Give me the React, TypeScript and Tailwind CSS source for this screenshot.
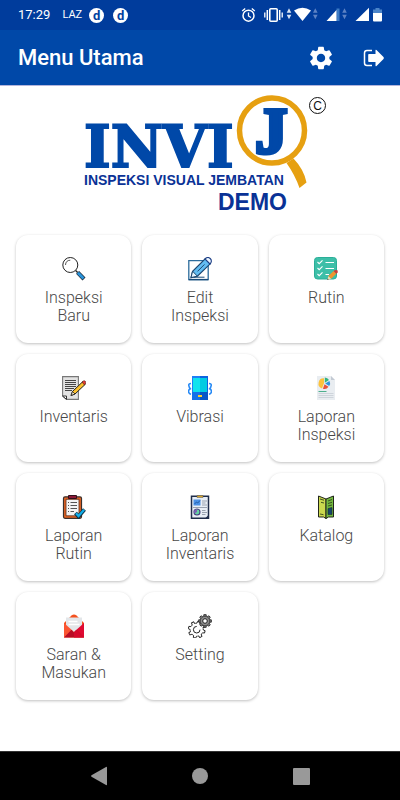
import type { ReactNode } from 'react'
import { MdSettings } from 'react-icons/md'

interface MenuItem {
  label: string
  icon: ReactNode
}

const GEAR_ANGLES = [0, 45, 90, 135, 180, 225, 270, 315]

function Icon({ children }: { children: ReactNode }) {
  return (
    <svg viewBox="0 0 24 24" className="size-6 shrink-0" fill="none" aria-hidden="true">
      {children}
    </svg>
  )
}

const items: MenuItem[] = [
  {
    label: 'Inspeksi Baru',
    icon: (
      <Icon>
        <circle cx="8.3" cy="8" r="7.5" stroke="#222" strokeWidth="1" />
        <path d="M3.5 8a5 5 0 0 1 4.8-4.8" stroke="#444" strokeWidth=".9" />
        <path d="M13.6 13.4l2 2" stroke="#222" strokeWidth="1.4" />
        <path d="M15.6 15.4l6.4 6.6" stroke="#1b2733" strokeWidth="4.2" />
        <path d="M15.9 15.7l5.6 5.8" stroke="#2a94dc" strokeWidth="2.8" />
      </Icon>
    ),
  },
  {
    label: 'Edit Inspeksi',
    icon: (
      <Icon>
        <path d="M.8 3.6h19.4v19H.8z" stroke="#2c6c9c" strokeWidth="1.3" />
        <path d="M.8 22.6h19.4" stroke="#174a78" strokeWidth="1.4" />
        <path d="M6 20.2h10.5" stroke="#174a78" />
        <path d="M3 20.6l1.6-6.4L17.4 1.6l5 5L9.4 19.2z" fill="#63bdf2" stroke="#1c4670" strokeWidth="1.2" />
        <path d="M3 20.6l1.6-6.4 4.8 5z" fill="#e8f5fd" stroke="#1c4670" />
        <path d="M17 2l1.5-1.2q2-1 3.7.7t.9 3.7L22 7z" fill="#eaf5ff" stroke="#1e3f86" strokeWidth="1.1" />
        <path d="M9.5 14.4l7-7" stroke="#1c4670" strokeWidth="1" />
      </Icon>
    ),
  },
  {
    label: 'Rutin',
    icon: (
      <Icon>
        <rect x=".5" y=".5" width="22" height="21.5" rx="3" fill="#3dbfa8" stroke="#2bae98" />
        <path
          d="M3.5 5l1.7 1.7L8.5 3.3M3.5 11l1.7 1.7L8.5 9.3M3.5 17l1.7 1.7L8.5 15.3M11.5 5.5H20M11.5 11.5H20M11.5 17.5H15"
          stroke="#fff"
          strokeWidth="1.1"
        />
        <path d="M13.2 23l1.2-4 2.8 2.8z" fill="#f5d9ae" />
        <path d="M13.2 23l.5-1.5 1 1z" fill="#333" />
        <path d="M14.4 19l5.2-4.9 2.7 2.7-5.1 5z" fill="#f0952d" />
        <path d="M19.6 14.1l1.5-1.1 2.7.4-.2 2-1.3 1.4z" fill="#d03a35" />
      </Icon>
    ),
  },
  {
    label: 'Inventaris',
    icon: (
      <Icon>
        <path d="M.6.6h15.8v22.8H4.5L.6 20z" fill="#e3e3e3" stroke="#777" strokeWidth="1.1" />
        <path d="M.6 20h3.9v3.4z" fill="#fff" stroke="#333" />
        <path
          d="M3 4.5h11M3 6.5h11M3 8.5h11M3 10.5h11M3 12.5h9M3 14.5h7"
          stroke="#333"
          strokeWidth=".9"
        />
        <path d="M9 19.5l1.5-4L20.8 5.6l2.6 2.6L13 18z" fill="#fbc02d" stroke="#222" />
        <path d="M9 19.5l1.5-4L13 18z" fill="#f6e3bd" stroke="#222" strokeWidth=".8" />
        <path d="M20.2 6.1l1.3-1.2q1.5-.4 2 .6t-.2 2.4l-1 1z" fill="#e53935" stroke="#4a1512" strokeWidth=".6" />
      </Icon>
    ),
  },
  {
    label: 'Vibrasi',
    icon: (
      <Icon>
        <path d="M4 0h16v24H4z" fill="#1f7ff5" />
        <path d="M12 0h8v24h-8z" fill="#0d63e0" />
        <path d="M5 2h7v14H5z" fill="#10e3ee" />
        <path d="M12 2h7v14h-7z" fill="#02cbe2" />
        <path d="M4 16h16v8H4z" fill="#0756c6" />
        <path d="M4 16h8v8H4z" fill="#1672e8" />
        <path d="M10 19h4v2h-4z" fill="#ffd02b" />
        <path
          d="M3 7.5q-2.5 0-2.2 2t1.5 3.3q-2 1-1.7 3t2.4 2.5M21 7.5q2.5 0 2.2 2t-1.5 3.3q2 1 1.7 3T21 18.3"
          stroke="#2589f5"
          strokeWidth="1.6"
        />
      </Icon>
    ),
  },
  {
    label: 'Laporan Inspeksi',
    icon: (
      <Icon>
        <path d="M3 0h14l4 4v20H3z" fill="#e9edf1" />
        <path d="M17 0l4 4h-4z" fill="#c3cad3" />
        <path d="M10 2.3a5.2 5.2 0 0 0-2 10.1l2-5.1z" fill="#fcc23c" />
        <path d="M10.8 6.7V1.5a5.2 5.2 0 0 1 4.2 2.6z" fill="#35b37e" />
        <path d="M11.2 7.4l4.3-2.3a5 5 0 0 1-.3 5z" fill="#2d93db" />
        <path d="M10.5 8.2l4 2.6A5 5 0 0 1 8.9 12.7z" fill="#e8503a" />
        <path d="M4.5 15.5h8" stroke="#4db08d" />
        <path d="M4.5 17.5h15M4.5 19.5h15M4.5 21.5h15" stroke="#c6cdd5" strokeWidth=".8" />
      </Icon>
    ),
  },
  {
    label: 'Laporan Rutin',
    icon: (
      <Icon>
        <rect x="1.5" y="1.8" width="18" height="21.5" rx="1.5" fill="#e46424" stroke="#3a302c" strokeWidth="1.2" />
        <path d="M4 4.3h13v16.5H4z" fill="#f4f4f4" stroke="#5a2b16" strokeWidth=".8" />
        <path d="M6.5.5h8v3h-8z" fill="#8b1837" stroke="#33101a" />
        <path d="M6 7.5h1M8.5 7.5H15M6 10.5h1M8.5 10.5H15M6 13.5h1M8.5 13.5H15M6 16.5h1M8.5 16.5H12" stroke="#555" />
        <path d="M13.5 18l3 3.5 6-7" stroke="#102f40" strokeWidth="3.8" />
        <path d="M14 18.3l2.5 2.8 5.6-6.3" stroke="#10aeea" strokeWidth="2.2" />
      </Icon>
    ),
  },
  {
    label: 'Laporan Inventaris',
    icon: (
      <Icon>
        <path d="M3.5 1.2h17v22h-17z" fill="#e8eef5" stroke="#1e2c49" strokeWidth="1.5" />
        <path d="M9 .5h6v2H9z" fill="#d7a52e" stroke="#555" strokeWidth=".5" />
        <path d="M5.5 4.5h7v6h-7z" fill="#4b91e6" />
        <path d="M6.5 9l2-2 1.2 1L12 5.5" stroke="#174f96" strokeWidth=".8" />
        <path d="M14 6h5M14 8h3.5M14 10h5M5 12.5h14M14 15.5h3.5M14 17.5h5M14 19.5h3.5" stroke="#9aa3b0" />
        <circle cx="9" cy="17" r="3" fill="#65d3a3" stroke="#44407c" strokeWidth="1.1" />
        <path d="M9 17v-3a3 3 0 0 0-2.6 4.5z" fill="#7c61b5" />
        <path d="M17.5 23l3-3v3z" fill="#1e2c49" />
      </Icon>
    ),
  },
  {
    label: 'Katalog',
    icon: (
      <Icon>
        <path d="M4.5 1l7.5 3v19.5l-2.5-1.5h-5z" fill="#cbd84f" stroke="#20251a" />
        <path d="M19.5 1L12 4v19.5l2.5-1.5h5z" fill="#72b93f" stroke="#20251a" />
        <path d="M6 4l4 1.2M7 7.3l3 .7M6 19l3.5.7M14 6l4-1.5M14 8.5l4-1.2M14 11l4-1" stroke="#33451c" strokeWidth=".9" />
        <path d="M14 13.5l4-1v7h-4z" fill="#14456b" stroke="#1c2a2a" strokeWidth=".6" />
      </Icon>
    ),
  },
  {
    label: 'Saran & Masukan',
    icon: (
      <Icon>
        <path d="M2 9l7.5-7.5q2.5-2.2 5 0L22 9v14.5H2z" fill="#f4511e" />
        <path d="M4 3.5h16V18H4z" fill="#e3e6e9" />
        <path d="M6.5 7.5h9M6.5 10.5h11" stroke="#fff" strokeWidth="1.4" />
        <path d="M2 9l10 9-10 5.5z" fill="#fb5532" />
        <path d="M22 9l-10 9 10 5.5z" fill="#df0a32" />
        <path d="M2 23.5l7.5-7.7 2.5 2.7 2.5-2.7 7.5 7.7z" fill="#b80c25" />
        <path d="M12 18.5l2.5-2.7 7.5 7.7H12z" fill="#d5092c" />
      </Icon>
    ),
  },
  {
    label: 'Setting',
    icon: (
      <Icon>
        {GEAR_ANGLES.map((angle) => (
          <path
            key={angle}
            d="M6.3 9.6l.9-.3.3-2h2.4l.3 2 .9.3"
            transform={`rotate(${angle + 15} 8.7 15.7)`}
            stroke="#222"
            strokeWidth=".9"
          />
        ))}
        <path d="M12 15.7a3.3 3.3 0 1 1-3.3-3.3" stroke="#222" />
        {GEAR_ANGLES.map((angle) => (
          <path
            key={angle}
            d="M15.8.7h2.4v3h-2.4z"
            transform={`rotate(${angle} 17 7)`}
            fill="#888"
            stroke="#222"
            strokeWidth=".9"
          />
        ))}
        <circle cx="17" cy="7" r="4.7" fill="#8e8e8e" stroke="#333" strokeWidth=".7" />
        <circle cx="17" cy="7" r="2.3" fill="#fff" stroke="#222" />
      </Icon>
    ),
  },
]

function DBadge() {
  return (
    <span className="flex size-[15px] items-center justify-center rounded-full bg-white text-[13px] leading-none font-bold text-[#0041a0]">
      d
    </span>
  )
}

function StatusBar() {
  return (
    <div className="flex h-[30px] items-center bg-[#003c9c] pr-4 pl-[18px] text-[13px] text-white">
      <span>17:29</span>
      <span className="ml-3 text-[11px]">LAZ</span>
      <span className="ml-[7px] flex gap-[9px]">
        <DBadge />
        <DBadge />
      </span>
      <svg viewBox="240 6 144 18" className="ml-auto h-[18px] w-36" fill="none" aria-hidden="true">
        <circle cx="248.5" cy="15.7" r="5.5" stroke="#fff" strokeWidth="1.5" />
        <path d="M248.5 12.5v3.5l2.5 1.5M242.2 11l3-2.5M254.8 11l-3-2.5" stroke="#fff" strokeWidth="1.3" />
        <rect x="269.8" y="8.8" width="7.4" height="12.4" rx="1" stroke="#fff" strokeWidth="1.6" />
        <path d="M267.3 10v10M279.7 10v10" stroke="#fff" strokeWidth="1.5" />
        <path d="M264.8 12.5v5M282.2 12.5v5" stroke="#fff" strokeWidth="1.3" />
        <path d="M289 8.3l2.3 4.5h-4.6zM289 19.3l2.3-4.5h-4.6z" fill="#dbe6f5" />
        <path d="M294 10.5q8.5-5.5 17 0L302.5 21z" fill="#fff" />
        <path d="M315.3 8.3l2.3 4.5h-4.6zM315.3 19.3l2.3-4.5h-4.6z" fill="#5d82c4" />
        <path d="M336.5 21V8.5h3V21z" fill="#3d7bc4" />
        <path d="M326.5 21L336.5 10v11z" fill="#fff" />
        <path d="M344.5 8.3l2.3 4.5h-4.6zM344.5 19.3l2.3-4.5h-4.6z" fill="#5d82c4" />
        <path d="M355.5 21L369 7.8V21z" fill="#fff" />
        <path d="M373 9.5h2.5V8h4v1.5h2.5V13h-9z" fill="#4b84c9" />
        <path d="M373 13h9v7.5q0 1-1 1h-7q-1 0-1-1z" fill="#fff" />
      </svg>
    </div>
  )
}

function AppBar() {
  return (
    <header className="flex h-14 items-center justify-between border-b border-[#b3b5dc] bg-[#0048a8] pr-[15px] pl-[18px] text-white">
      <h1 className="text-[22px] leading-7 font-medium">Menu Utama</h1>
      <div className="flex items-center gap-7">
        <button type="button" aria-label="Pengaturan">
          <MdSettings className="size-7" />
        </button>
        <button type="button" aria-label="Keluar">
          <svg viewBox="0 0 22 18" className="h-[18px] w-[22px]" fill="none" aria-hidden="true">
            <path d="M9 1.5H4q-2.5 0-2.5 2.5v10q0 2.5 2.5 2.5h5" stroke="#fff" strokeWidth="1.5" />
            <path d="M6 5h6.5V1.5q0-1.2 1-.4l7 7q.8.9 0 1.8l-7 7q-1 .8-1-.4V13H6q-.8 0-.8-.8V5.8Q5.2 5 6 5z" fill="#fff" />
          </svg>
        </button>
      </div>
    </header>
  )
}

function Logo() {
  return (
    <svg
      viewBox="70 90 260 124"
      className="mx-auto mt-1 h-[124px] w-[260px]"
      role="img"
      aria-label="INVIJ Inspeksi Visual Jembatan Demo"
    >
      <path d="M286.5 163l7-4.5q10.5 11 13 24l-7 5.5q-4.5-13-13-25z" fill="#e6a011" />
      <circle cx="272" cy="130.5" r="32.5" fill="#fff" stroke="#e6a011" strokeWidth="5.5" />
      <text
        x="84"
        y="167"
        fontSize="57"
        strokeWidth="2"
        className="fill-[#0048a8] stroke-[#0048a8] font-['DejaVu_Serif'] font-bold"
      >
        INVI
      </text>
      <text
        x="255"
        y="153"
        fontSize="65"
        strokeWidth="4"
        className="fill-[#0048a8] stroke-[#0048a8] font-['Liberation_Serif'] font-bold"
      >
        J
      </text>
      <text x="84" y="185" fontSize="14" className="fill-[#0a3296] font-['Liberation_Sans'] font-bold">
        INSPEKSI VISUAL JEMBATAN
      </text>
      <text x="218" y="210" fontSize="23" className="fill-[#0a3296] font-['Liberation_Sans'] font-bold">
        DEMO
      </text>
      <circle cx="317.5" cy="105.5" r="8" fill="none" stroke="#111" />
      <text x="317.5" y="110" fontSize="12" textAnchor="middle" className="fill-[#111] font-['Liberation_Sans']">
        C
      </text>
    </svg>
  )
}

function NavBar() {
  return (
    <nav className="flex h-[49px] items-center border-t border-[#333] bg-black px-12">
      <button type="button" aria-label="Kembali" className="flex flex-1 justify-center">
        <svg viewBox="0 0 18 20" className="h-5 w-[18px]" aria-hidden="true">
          <path d="M1.5 9.3L16 .9q1-.4 1 .6v17q0 1-1 .6L1.5 10.7q-1-.7 0-1.4z" fill="#999" />
        </svg>
      </button>
      <button type="button" aria-label="Beranda" className="flex flex-1 justify-center">
        <span className="size-4 rounded-full bg-[#999]" />
      </button>
      <button type="button" aria-label="Terbaru" className="flex flex-1 justify-center">
        <span className="size-[17px] rounded-[1px] bg-[#999]" />
      </button>
    </nav>
  )
}

export default function App() {
  return (
    <div className="flex min-h-screen flex-col bg-white font-[Roboto,sans-serif]">
      <StatusBar />
      <AppBar />
      <main className="flex-1">
        <Logo />
        <div className="mt-[21px] grid grid-cols-3 gap-[11px] px-4 pb-4">
          {items.map((item) => (
            <button
              key={item.label}
              type="button"
              className="flex min-h-[108px] flex-col items-center gap-2 rounded-xl bg-white px-5 pt-[22px] pb-4 text-base leading-[18px] font-light text-[#484848] shadow-[0_1px_3px_rgba(0,0,0,0.25)]"
            >
              {item.icon}
              <span>{item.label}</span>
            </button>
          ))}
        </div>
      </main>
      <NavBar />
    </div>
  )
}
